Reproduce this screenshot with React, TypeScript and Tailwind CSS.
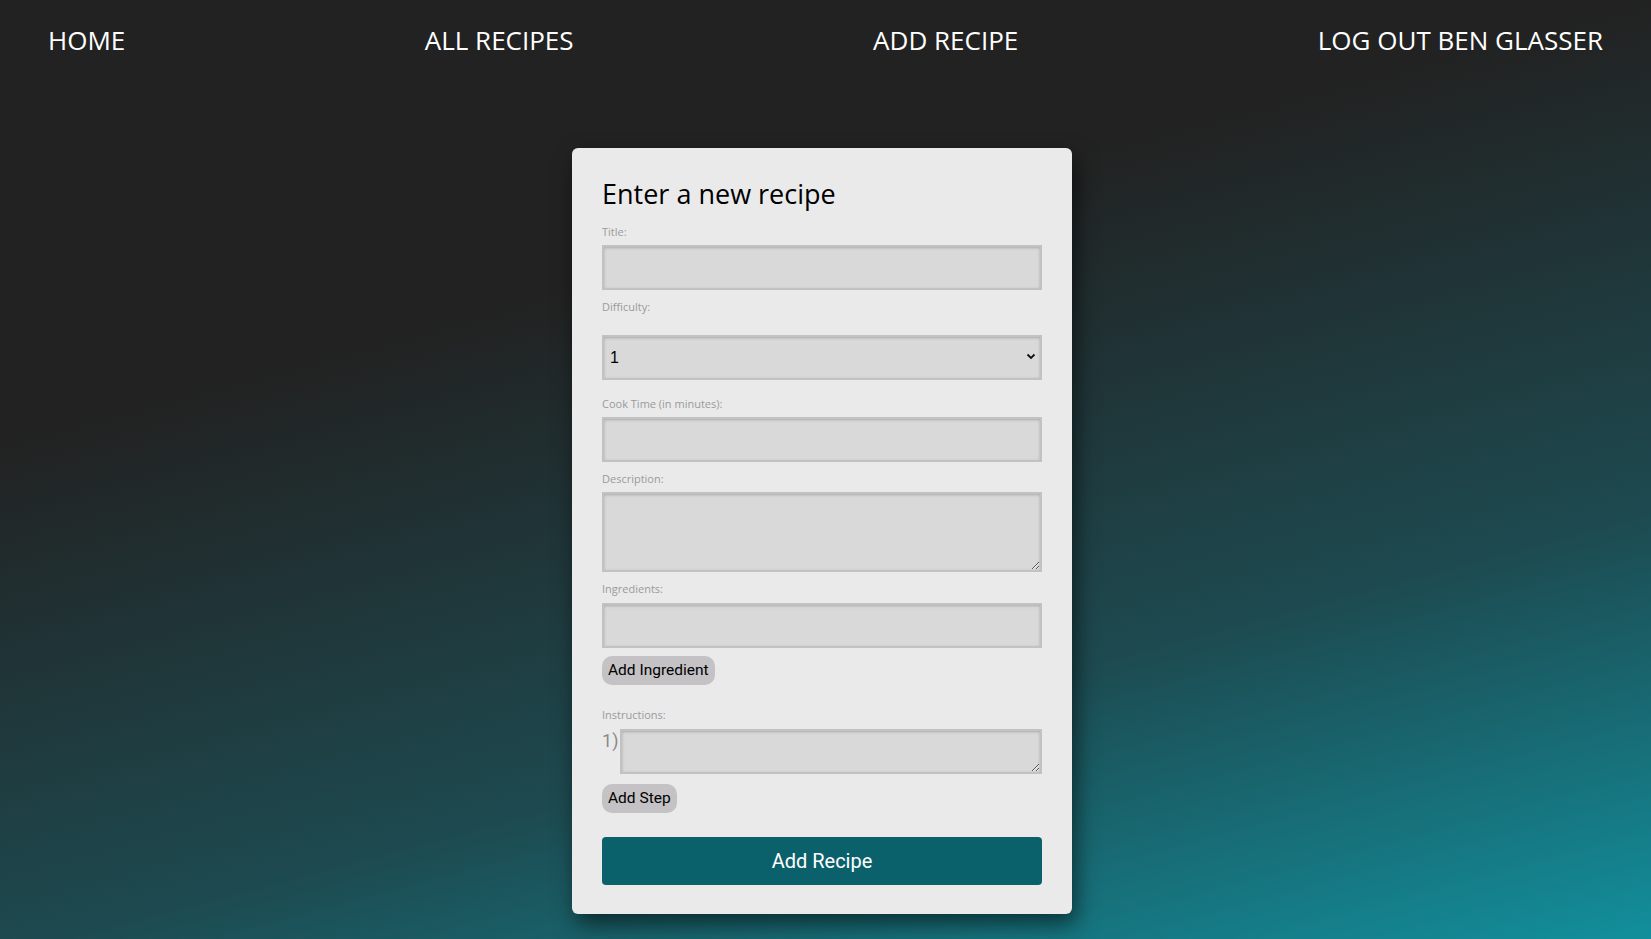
import { useState } from 'react';

const navLinks = ['Home', 'All Recipes', 'Add Recipe', 'Log Out Ben Glasser'];

const inputClass =
  'block w-full bg-[#d9d9d9] border-2 border-[#c2c2c2] shadow-[inset_0_1px_3px_rgba(0,0,0,0.22)] outline-none px-2 text-[16px] text-black';

function Label({ children, className = '' }: { children: string; className?: string }) {
  return (
    <label className={`block text-[11px] leading-[15px] text-[#9a9a9a] ${className}`}>{children}</label>
  );
}

export default function App() {
  const [steps, setSteps] = useState<string[]>(['']);
  const [difficulty, setDifficulty] = useState('1');

  return (
    <div
      className="min-h-screen w-full bg-[linear-gradient(165deg,#222222_32%,#1d4a50_69%,#128f9c_100%)]"
      style={{ fontFamily: '"Open Sans", "Noto Sans", sans-serif' }}
    >
      {/* Nav */}
      <nav className="flex h-[80px] items-center justify-between px-[48px]">
        {navLinks.map((link) => (
          <a key={link} href="#" className="text-[26px] leading-[36px] uppercase text-white">
            {link}
          </a>
        ))}
      </nav>

      {/* Form card */}
      <div className="flex justify-center pr-[7px] pb-[25px]">
        <form
          className="mt-[68px] flex w-[500px] flex-col rounded-md bg-[#eaeaea] px-[30px] pt-[30px] pb-[29px] shadow-[4px_10px_22px_rgba(0,0,0,0.55)]"
          onSubmit={(e) => e.preventDefault()}
        >
          <h1 className="text-[27px] leading-[32px] text-black">Enter a new recipe</h1>

          <Label className="mt-[14px]">Title:</Label>
          <input type="text" className={`${inputClass} mt-[6px] h-[45px]`} />

          <Label className="mt-[9px]">Difficulty:</Label>
          <div className="relative mt-[21px]">
            <select
              value={difficulty}
              onChange={(e) => setDifficulty(e.target.value)}
              className={`${inputClass} h-[45px] appearance-none !px-[6px]`}
              style={{ fontFamily: '"Liberation Sans", Arial, sans-serif' }}
            >
              {[1, 2, 3, 4, 5].map((n) => (
                <option key={n} value={n}>
                  {n}
                </option>
              ))}
            </select>
            <svg
              className="pointer-events-none absolute right-[6px] top-[17px]"
              width="10"
              height="8"
              viewBox="0 0 10 8"
            >
              <path d="M1.5 2.5 L5 6 L8.5 2.5" fill="none" stroke="#111" strokeWidth="1.8" />
            </svg>
          </div>

          <Label className="mt-[16px]">Cook Time (in minutes):</Label>
          <input type="text" className={`${inputClass} mt-[6px] h-[45px]`} />

          <Label className="mt-[9px]">Description:</Label>
          <textarea className={`${inputClass} mt-[6px] h-[80px]`} />

          <Label className="mt-[9px]">Ingredients:</Label>
          <input type="text" className={`${inputClass} mt-[7px] h-[45px]`} />

          <button
            type="button"
            className="mt-[8px] h-[29px] self-start rounded-[10px] bg-[#c4c2c4] px-[6px] text-[15.5px] text-black"
            style={{ fontFamily: 'Roboto, sans-serif' }}
          >
            Add Ingredient
          </button>

          <Label className="mt-[22px]">Instructions:</Label>
          {steps.map((step, i) => (
            <div key={i} className="mt-[7px] flex items-start gap-[4px]">
              <span
                className="w-[14px] text-[18px] leading-[24px] text-[#8a8a8a]"
                style={{ fontFamily: 'Roboto, sans-serif' }}
              >
                {i + 1})
              </span>
              <textarea
                value={step}
                onChange={(e) => setSteps(steps.map((s, j) => (j === i ? e.target.value : s)))}
                className={`${inputClass} h-[45px] flex-1`}
              />
            </div>
          ))}

          <button
            type="button"
            onClick={() => setSteps([...steps, ''])}
            className="mt-[10px] h-[29px] self-start rounded-[10px] bg-[#c4c2c4] px-[6px] text-[15.5px] text-black"
            style={{ fontFamily: 'Roboto, sans-serif' }}
          >
            Add Step
          </button>

          <button
            type="submit"
            className="mt-[24px] h-[48px] w-full rounded-[4px] bg-[#0b616b] text-[20px] text-white"
            style={{ fontFamily: 'Roboto, sans-serif' }}
          >
            Add Recipe
          </button>
        </form>
      </div>
    </div>
  );
}
